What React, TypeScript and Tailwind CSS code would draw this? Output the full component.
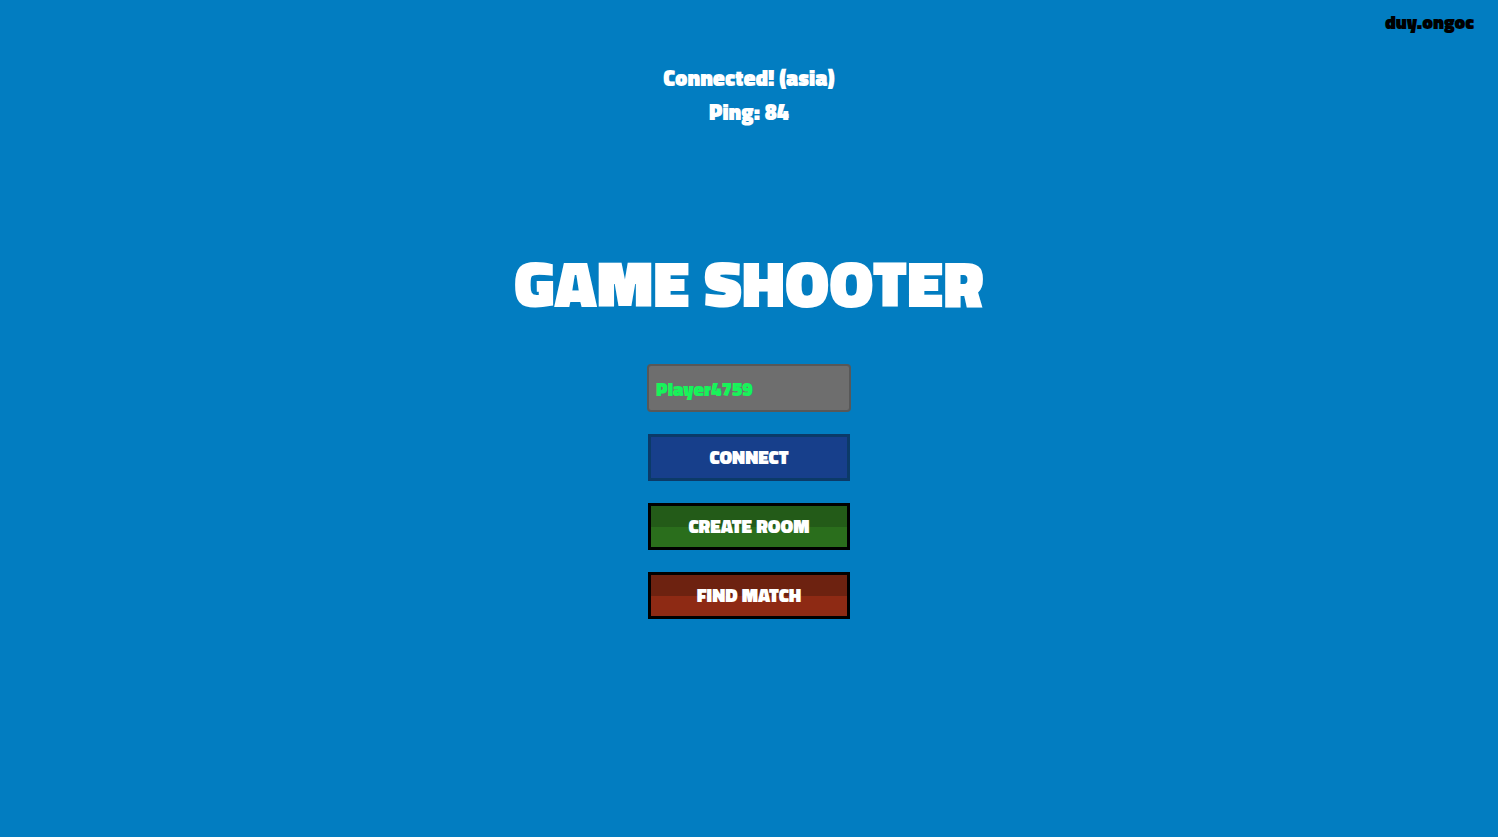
import React from 'react';

const font = { fontFamily: '"Titillium Web", Inter, "Noto Sans", sans-serif' };

function MenuButton({ label, top, bottom, border }: { label: string; top: string; bottom: string; border: string }) {
  return (
    <button className={`w-[202px] h-[47px] border-[3px] ${border} flex flex-col overflow-hidden relative`}>
      <div className={`h-1/2 w-full ${top}`} />
      <div className={`h-1/2 w-full ${bottom}`} />
      <span className="absolute inset-0 flex items-center justify-center text-white text-[19px] font-black">
        {label}
      </span>
    </button>
  );
}

export default function App() {
  return (
    <div className="w-full h-[837px] bg-[#027dc1] relative flex flex-col items-center" style={font}>
      <div className="absolute top-[8px] right-[24px] text-black font-black text-[19px]">duy.ongoc</div>

      <div className="mt-[61px] flex flex-col items-center text-white font-extrabold text-[22px] leading-[34px]">
        <p>Connected! (asia)</p>
        <p>Ping: 84</p>
      </div>

      <h1 className="mt-[117px] text-white font-black text-[66px] leading-[74px]">GAME SHOOTER</h1>

      <div className="mt-[44px] flex flex-col items-center gap-[22px]">
        <input
          defaultValue="Player4759"
          className="w-[204px] h-[48px] bg-[#6e6e6e] border-2 border-[#585858] rounded-[4px] px-[7px] text-[#17f35a] font-black text-[19px] outline-none"
        />
        <button className="w-[202px] h-[47px] bg-[#173f8b] border-[3px] border-[#0b3a68] text-white text-[19px] font-black">
          CONNECT
        </button>
        <MenuButton label="CREATE ROOM" top="bg-[#235b18]" bottom="bg-[#2a6e1c]" border="border-black" />
        <MenuButton label="FIND MATCH" top="bg-[#6d2210]" bottom="bg-[#8e2a14]" border="border-black" />
      </div>
    </div>
  );
}
